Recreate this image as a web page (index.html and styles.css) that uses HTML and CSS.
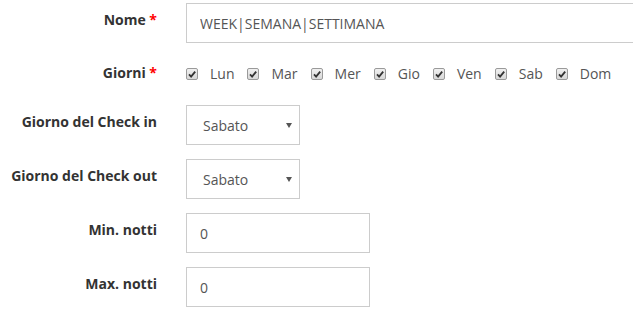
FILE: index.html
```html
<!DOCTYPE html>
<html lang="it">
<head>
    <meta charset="UTF-8">
    <meta name="viewport" content="width=device-width, initial-scale=1.0">
    <title>Periodo</title>
    <link rel="stylesheet" href="styles.css">
</head>
<body>
    <form class="form-horizontal">
        <div class="form-group">
            <label class="control-label">Nome <span class="required">*</span></label>
            <div class="control">
                <input type="text" class="form-control input-wide" value="WEEK|SEMANA|SETTIMANA">
            </div>
        </div>

        <div class="form-group group-days">
            <label class="control-label">Giorni <span class="required">*</span></label>
            <div class="control days">
                <label class="day"><span class="check"><svg viewBox="0 0 10 10"><path d="M2 5.4 L4.1 7.6 L8.2 2.6" /></svg></span>Lun</label>
                <label class="day"><span class="check"><svg viewBox="0 0 10 10"><path d="M2 5.4 L4.1 7.6 L8.2 2.6" /></svg></span>Mar</label>
                <label class="day"><span class="check"><svg viewBox="0 0 10 10"><path d="M2 5.4 L4.1 7.6 L8.2 2.6" /></svg></span>Mer</label>
                <label class="day"><span class="check"><svg viewBox="0 0 10 10"><path d="M2 5.4 L4.1 7.6 L8.2 2.6" /></svg></span>Gio</label>
                <label class="day"><span class="check"><svg viewBox="0 0 10 10"><path d="M2 5.4 L4.1 7.6 L8.2 2.6" /></svg></span>Ven</label>
                <label class="day"><span class="check"><svg viewBox="0 0 10 10"><path d="M2 5.4 L4.1 7.6 L8.2 2.6" /></svg></span>Sab</label>
                <label class="day"><span class="check"><svg viewBox="0 0 10 10"><path d="M2 5.4 L4.1 7.6 L8.2 2.6" /></svg></span>Dom</label>
            </div>
        </div>

        <div class="form-group">
            <label class="control-label">Giorno del Check in</label>
            <div class="control">
                <div class="select-wrap">
                    <select class="form-control">
                        <option>Sabato</option>
                    </select>
                </div>
            </div>
        </div>

        <div class="form-group">
            <label class="control-label">Giorno del Check out</label>
            <div class="control">
                <div class="select-wrap">
                    <select class="form-control">
                        <option>Sabato</option>
                    </select>
                </div>
            </div>
        </div>

        <div class="form-group">
            <label class="control-label">Min. notti</label>
            <div class="control">
                <input type="text" class="form-control input-num" value="0">
            </div>
        </div>

        <div class="form-group">
            <label class="control-label">Max. notti</label>
            <div class="control">
                <input type="text" class="form-control input-num" value="0">
            </div>
        </div>
    </form>
</body>
</html>
```

FILE: styles.css
```css
body {
    font-family: 'Open Sans', 'Liberation Sans', sans-serif;
    font-size: 14px;
    line-height: 20px;
    margin: 0;
    padding: 0;
    background-color: #fff;
    color: #333;
    overflow: hidden;
}

.form-horizontal {
    padding-top: 3px;
}

.form-group {
    display: grid;
    grid-template-columns: 157px 1fr;
    column-gap: 29px;
    margin-bottom: 14px;
}

.control-label {
    text-align: right;
    font-weight: 700;
    padding-top: 7px;
    white-space: nowrap;
}

.required {
    color: #f00;
}

.form-control {
    box-sizing: border-box;
    height: 40px;
    border: 1px solid #ccc;
    border-radius: 0;
    background-color: #fff;
    color: #555;
    font-family: inherit;
    font-size: 14px;
    padding: 0 13px;
    margin: 0;
    outline: none;
}

.input-wide {
    width: 480px;
}

.input-num {
    width: 184px;
}

/* select */
.select-wrap {
    position: relative;
    width: 114px;
}

.select-wrap select {
    -webkit-appearance: none;
    appearance: none;
    width: 114px;
    padding-left: 16px;
}

.select-wrap::after {
    content: '';
    position: absolute;
    right: 8px;
    top: 18px;
    border-left: 3px solid transparent;
    border-right: 3px solid transparent;
    border-top: 5px solid #555;
    pointer-events: none;
}

/* days */
.group-days .control-label {
    padding-top: 6px;
}

.days {
    display: flex;
    align-items: center;
    height: 34px;
}

.day {
    display: flex;
    align-items: center;
    color: #555;
    margin-right: 13px;
}

.check {
    box-sizing: border-box;
    display: inline-flex;
    align-items: center;
    justify-content: center;
    width: 12px;
    height: 12px;
    margin-right: 12px;
    border: 1px solid #9a9a9a;
    border-radius: 2px;
    background: linear-gradient(#f0f0f0, #d8d8d8);
}

.check svg {
    width: 10px;
    height: 10px;
}

.check path {
    fill: none;
    stroke: #333;
    stroke-width: 1.8;
}
```
